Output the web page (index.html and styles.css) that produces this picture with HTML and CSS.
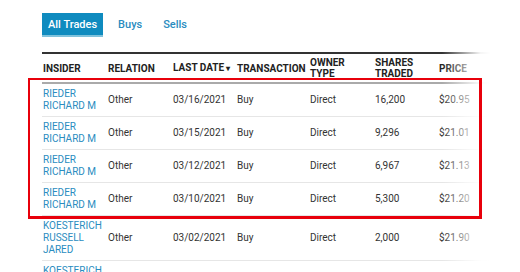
FILE: index.html
```html
<!DOCTYPE html>
<html>
<head>
<meta charset="utf-8">
<link rel="stylesheet" href="styles.css">
</head>
<body>
<div class="page">
  <div class="tabs">
    <span class="tab active">All Trades</span>
    <span class="tab">Buys</span>
    <span class="tab">Sells</span>
  </div>
  <div class="table-wrap">
    <table class="trades">
      <colgroup>
        <col class="c1"><col class="c2"><col class="c3"><col class="c4"><col class="c5"><col class="c6"><col class="c7">
      </colgroup>
      <thead>
        <tr>
          <th>INSIDER</th>
          <th>RELATION</th>
          <th>LAST DATE<span class="caret">&#9662;</span></th>
          <th>TRANSACTION</th>
          <th>OWNER<br>TYPE</th>
          <th>SHARES<br>TRADED</th>
          <th>PRICE</th>
        </tr>
      </thead>
      <tbody>
        <tr><td><a>RIEDER<br>RICHARD M</a></td><td>Other</td><td>03/16/2021</td><td>Buy</td><td>Direct</td><td>16,200</td><td>$20.95</td></tr>
        <tr><td><a>RIEDER<br>RICHARD M</a></td><td>Other</td><td>03/15/2021</td><td>Buy</td><td>Direct</td><td>9,296</td><td>$21.01</td></tr>
        <tr><td><a>RIEDER<br>RICHARD M</a></td><td>Other</td><td>03/12/2021</td><td>Buy</td><td>Direct</td><td>6,967</td><td>$21.13</td></tr>
        <tr><td><a>RIEDER<br>RICHARD M</a></td><td>Other</td><td>03/10/2021</td><td>Buy</td><td>Direct</td><td>5,300</td><td>$21.20</td></tr>
        <tr><td><a>KOESTERICH<br>RUSSELL<br>JARED</a></td><td>Other</td><td>03/02/2021</td><td>Buy</td><td>Direct</td><td>2,000</td><td>$21.90</td></tr>
        <tr><td><a>KOESTERICH<br>RUSSELL<br>JARED</a></td><td>Other</td><td>03/01/2021</td><td>Buy</td><td>Direct</td><td>2,000</td><td>$21.90</td></tr>
      </tbody>
    </table>
    <div class="fade"></div>
  </div>
  <div class="highlight"></div>
</div>
</body>
</html>
```
FILE: styles.css
```css
html, body {
  margin: 0;
  padding: 0;
  background: #fff;
  overflow: hidden;
  height: 272px;
}
.page {
  position: relative;
  padding: 13px 0 0 42px;
  width: 448px;
  font-family: Roboto, "Liberation Sans", sans-serif;
}
.tabs {
  display: flex;
  height: 24px;
}
.tab {
  display: flex;
  align-items: center;
  padding: 0 6px;
  font-family: Roboto, "Liberation Sans", sans-serif;
  font-size: 11px;
  font-weight: 500;
  color: #2a8cc0;
  box-sizing: border-box;
  border-bottom: 2px solid transparent;
}
.tab + .tab {
  margin-left: 9px;
}
.tab.active {
  background: #0f8bbf;
  color: #fff;
  padding: 0 6px;
  border-bottom-color: #7fc2dc;
}
.table-wrap {
  position: relative;
  margin-top: 15px;
  border-top: 2px solid #333;
}
.trades {
  width: 100%;
  border-collapse: collapse;
  table-layout: fixed;
}
.c1 { width: 65px; }
.c2 { width: 65px; }
.c3 { width: 64px; }
.c4 { width: 73px; }
.c5 { width: 65px; }
.c6 { width: 64px; }
.trades th {
  height: 28px;
  padding: 0 0 0 1px;
  text-align: left;
  font-size: 10px;
  font-weight: 700;
  line-height: 11px;
  color: #222;
  vertical-align: middle;
  border-bottom: 2px solid #aaa;
}
.caret {
  font-size: 8px;
  margin-left: 2px;
}
.trades td {
  padding: 4px 0 4px 1px;
  height: 24px;
  font-size: 10px;
  line-height: 12px;
  color: #333;
  vertical-align: middle;
  border-bottom: 1px solid #e6e6e6;
}
.trades td a {
  display: block;
  color: #2a8cc0;
}
.fade {
  position: absolute;
  top: -2px;
  right: 0;
  bottom: 0;
  width: 48px;
  background: linear-gradient(to right, rgba(255,255,255,0), rgba(255,255,255,0.95) 80%, #fff);
}
.highlight {
  position: absolute;
  left: 28px;
  top: 78px;
  width: 454px;
  height: 141px;
  box-sizing: border-box;
  border: 2px solid #e8000b;
  border-right-width: 3px;
  border-bottom-width: 3px;
}
```
